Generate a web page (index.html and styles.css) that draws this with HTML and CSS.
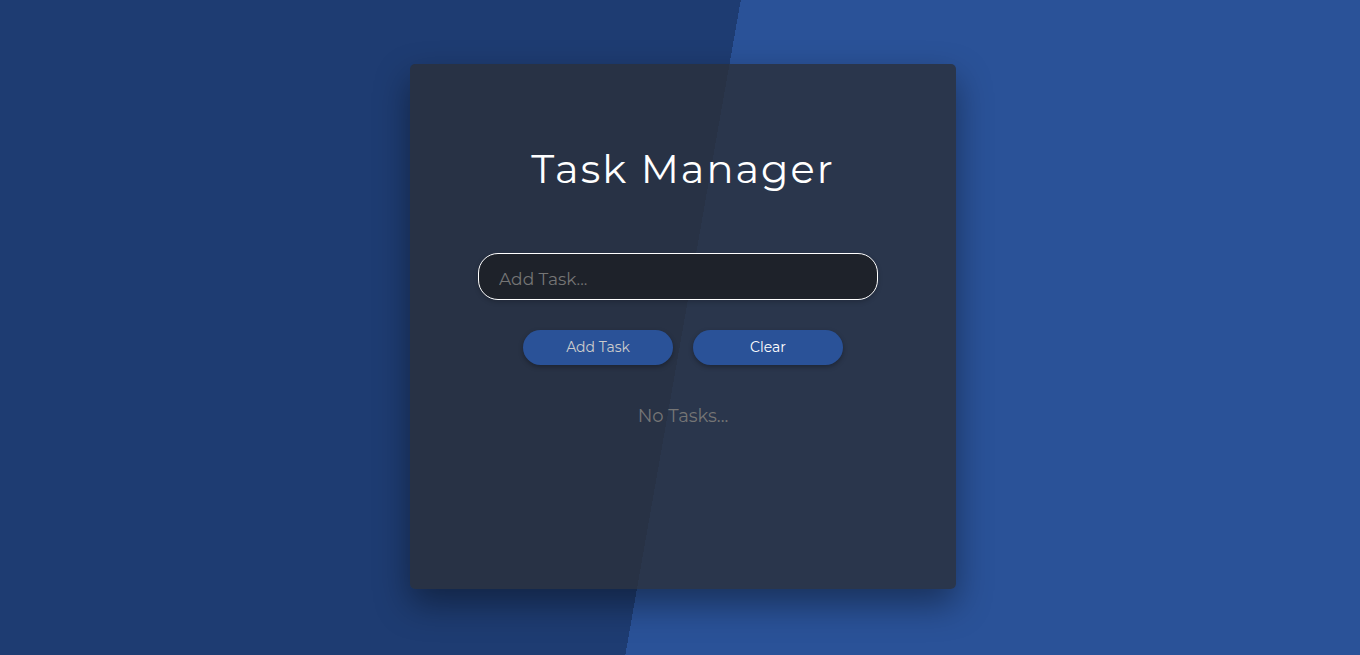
FILE: index.html
```html
<!DOCTYPE html>
<html lang="en">
<head>
  <meta charset="UTF-8">
  <meta name="viewport" content="width=device-width, initial-scale=1">
  <title>Task Manager</title>
  <link rel="stylesheet" href="styles.css">
</head>
<body class="page">
  <main class="card">
    <h1 class="title">Task Manager</h1>
    <form class="task-form">
      <input class="task-input" type="text" placeholder="Add Task..." aria-label="Add Task">
      <div class="actions">
        <button class="btn btn-add" type="button">Add Task</button>
        <button class="btn" type="button">Clear</button>
      </div>
    </form>
    <p class="empty">No Tasks...</p>
  </main>
</body>
</html>
```

FILE: styles.css
```css
* {
  box-sizing: border-box;
}

.page {
  margin: 0;
  min-height: 100vh;
  padding: 64px 10px 64px 16px;
  font-family: Montserrat, Inter, "Liberation Sans", sans-serif;
  color: #fff;
  background: linear-gradient(100deg, #1e3c72 calc(50% + 3px), #2a5298 calc(50% + 3px));
}

.card {
  display: flex;
  flex-direction: column;
  align-items: center;
  width: 100%;
  max-width: 546px;
  min-height: 525px;
  margin: 0 auto;
  padding: 80px 20px;
  border-radius: 5px;
  background: rgba(43, 48, 57, 0.8);
  box-shadow: 0 15px 35px rgba(0, 0, 0, 0.4);
}

.title {
  margin: 0;
  font-size: 40px;
  font-weight: 400;
  line-height: 49px;
  letter-spacing: 2px;
}

.task-form {
  display: flex;
  flex-direction: column;
  align-items: center;
  gap: 30px;
  width: 100%;
  margin-top: 60px;
}

.task-input {
  width: 100%;
  max-width: 400px;
  height: 47px;
  margin-right: 10px;
  padding: 5px 20px 0;
  border: 1px solid #fff;
  border-radius: 20px;
  background: #1e222a;
  box-shadow: 0 2px 5px rgba(0, 0, 0, 0.2);
  color: #fff;
  font-family: inherit;
  font-size: 17px;
}

.task-input::placeholder {
  color: #757575;
}

.actions {
  display: flex;
  justify-content: center;
  flex-wrap: wrap;
  gap: 20px;
}

.btn {
  width: 150px;
  height: 35px;
  padding: 0 0 2px;
  border: 0;
  border-radius: 20px;
  background: #2a5298;
  box-shadow: 0 2px 5px rgba(0, 0, 0, 0.3);
  color: #fff;
  font-family: inherit;
  font-size: 14px;
  cursor: pointer;
}

.btn-add {
  color: #ccc;
}

.empty {
  margin: 40px 0 0;
  color: #757575;
  font-size: 18px;
  line-height: 22px;
}
```
